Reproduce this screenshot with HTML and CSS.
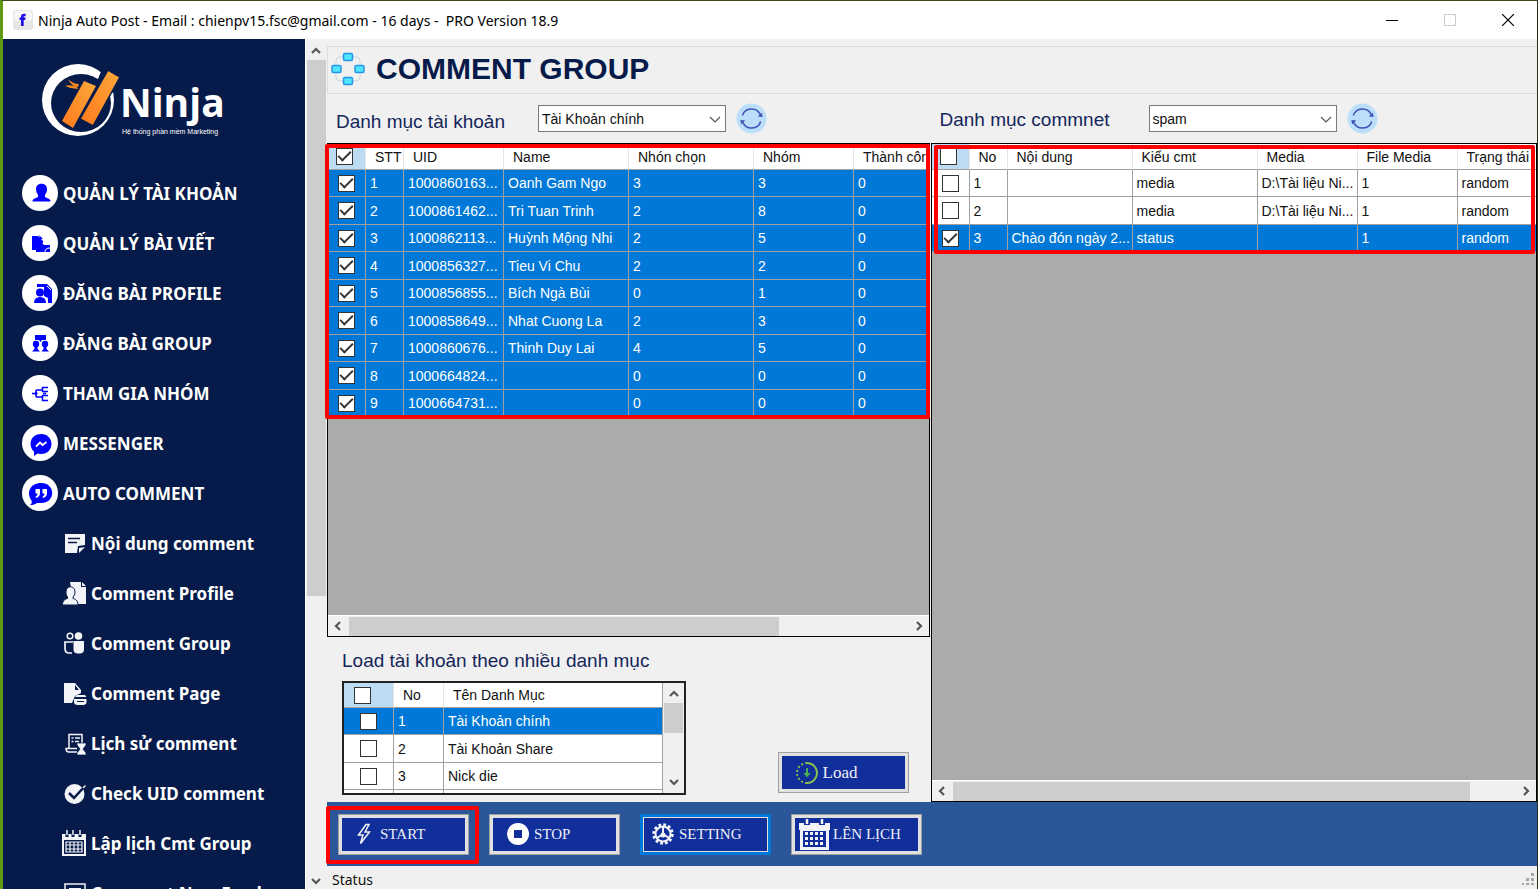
FILE: index.html
```html
<!DOCTYPE html>
<html lang="vi">
<head>
<meta charset="utf-8">
<title>Ninja Auto Post</title>
<link rel="stylesheet" href="styles.css">
</head>
<body>
<svg class="defs" aria-hidden="true">
  <symbol id="up" viewBox="0 0 10 7"><path d="M1 6 5 2l4 4" fill="none" stroke="currentColor" stroke-width="2.2"/></symbol>
  <symbol id="down" viewBox="0 0 10 7"><path d="M1 1l4 4 4-4" fill="none" stroke="currentColor" stroke-width="2.2"/></symbol>
  <symbol id="left" viewBox="0 0 7 10"><path d="M6 1 2 5l4 4" fill="none" stroke="currentColor" stroke-width="2.2"/></symbol>
  <symbol id="right" viewBox="0 0 7 10"><path d="M1 1l4 4-4 4" fill="none" stroke="currentColor" stroke-width="2.2"/></symbol>
  <symbol id="chevron" viewBox="0 0 12 7"><path d="M1 1l5 5 5-5" fill="none" stroke="#555" stroke-width="1.2"/></symbol>
  <symbol id="refresh" viewBox="0 0 32 32"><circle cx="16" cy="16" r="15.5" fill="#bbdefb"/><path d="M6.500 13a10 10 0 0 1 18.600-1M25.500 19a10 10 0 0 1-18.600 1" fill="none" stroke="#3f51b5" stroke-width="1.600"/><path d="M22.500 14l5 .5-.8-4.500zM9.500 18l-5-.5.8 4.500z" fill="#3f51b5"/></symbol>
</svg>
<div class="window">
  <header class="titlebar">
    <svg class="app-icon" viewBox="0 0 20 20"><rect width="20" height="20" rx="3" fill="#e6e6e6"/><rect x="1" y="1" width="18" height="10" rx="3" fill="#f6f6f6"/><path d="M8 16V10H6.500V7.500H8V6.500C8 4.500 9.200 3.700 11 3.700h1.700v2.500h-1c-.8 0-1 .3-1 1v.4h1.900L12.300 10h-1.600v6z" fill="#2010e0"/></svg>
    <span class="title-text">Ninja Auto Post - Email : chienpv15.fsc@gmail.com - 16 days -&nbsp; PRO Version 18.9</span>
    <button class="win-btn" aria-label="Minimize"><svg viewBox="0 0 12 12"><path d="M0 6.500h12" stroke="#000"/></svg></button>
    <button class="win-btn" aria-label="Maximize"><svg viewBox="0 0 12 12"><path d="M.5.5h11v11H.5z" fill="none" stroke="#ccc"/></svg></button>
    <button class="win-btn" aria-label="Close"><svg viewBox="0 0 12 12"><path d="M0 0l12 12M12 0 0 12" stroke="#000" stroke-width="1.200"/></svg></button>
  </header>
  <div class="body">
    <nav class="sidebar">
      <svg class="logo" viewBox="0 0 190 80">
        <defs><linearGradient id="og" x1="0" y1="1" x2="1" y2="0"><stop offset="0" stop-color="#ff7a1c"/><stop offset="1" stop-color="#fba83a"/></linearGradient></defs>
        <circle cx="37" cy="38" r="36" fill="#fff"/><ellipse cx="40" cy="41" rx="30" ry="29" fill="#061b4a"/>
        <path d="M63 3l20 8-9 19-13 4-8-8z" fill="#061b4a"/>
        <path d="M43 19l12 5-23 42-11-7z" fill="url(#og)"/><path d="M67 8l12 7-27 49-13-7z" fill="url(#og)" stroke="#061b4a" stroke-width="1.500"/>
        <path d="M27 17q5 5 11 5l-1 3q-7-1-10-8zM24 24q5-2 12 1l1 2q-7 0-13-3z" fill="#f58a20"/>
        <text class="logo-name" x="79" y="55">Ninja</text>
        <text class="logo-sub" x="81" y="72">Hệ thống phần mềm Marketing</text>
      </svg>
      <a class="item" href="#"><svg viewBox="0 0 36 36"><circle cx="18" cy="18" r="18" fill="#fff"/><path d="M14 14c0-7 11-7 11 0 0 3-1 4-2 6v2c2 1.500 5 1 5.500 4.500H10.500C10.800 23 14 23.500 16 22v-2c-1-2-2-3-2-6z" fill="#00f"/></svg>QUẢN LÝ TÀI KHOẢN</a>
      <a class="item" href="#"><svg viewBox="0 0 36 36"><circle cx="18" cy="18" r="18" fill="#fff"/><path d="M10 11h6l5 5v2h-6v7h-5zM17 10l4 4h-3z" fill="#00f"/><path d="M14 18h6l2 2h6v7H14z" fill="#00f"/><path d="M23 27q0-4 5-4" stroke="#fff" fill="none"/></svg>QUẢN LÝ BÀI VIẾT</a>
      <a class="item" href="#"><svg viewBox="0 0 36 36"><circle cx="18" cy="18" r="18" fill="#fff"/><path d="M15 9h10l5 5v14h-4v-5l-4-2V12h-7z" fill="#00f"/><path d="M25 11l4 4" stroke="#fff"/><circle cx="18" cy="17.500" r="4" fill="#00f"/><path d="M12 28q0-6 6-6t6 6z" fill="#00f"/></svg>ĐĂNG BÀI PROFILE</a>
      <a class="item" href="#"><svg viewBox="0 0 36 36"><circle cx="18" cy="18" r="18" fill="#fff"/><path d="M13 10h11v5h-4l-1.500 2-1.500-2h-4z" fill="#00f"/><circle cx="14" cy="19" r="3.200" fill="#00f"/><circle cx="23" cy="19" r="3.200" fill="#00f"/><path d="M12.500 21h3v3l2.500 2.500H10l2.500-2.500zM21.500 21h3v3l2.500 2.500h-7.500l2-2.500z" fill="#00f"/></svg>ĐĂNG BÀI GROUP</a>
      <a class="item" href="#"><svg viewBox="0 0 36 36"><circle cx="18" cy="18" r="18" fill="#fff"/><g fill="none" stroke="#00f" stroke-width="1.500"><path d="M10 18.500h4M14 15v7M14 15h6M14 22h6M26 12.500h-5.500v4H26M26 20.500h-5.500v5H26M24 18.500h-3"/></g><circle cx="14" cy="18.500" r="1.500" fill="#00f"/></svg>THAM GIA NHÓM</a>
      <a class="item" href="#"><svg viewBox="0 0 36 36"><circle cx="18" cy="18" r="18" fill="#fff"/><path d="M19 9c14 0 14 20 0 20-1.500 0-2.500-.3-3.500-.5L12 31v-4.500C6 21 8 9 19 9z" fill="#00f"/><path d="M14 21.500l4-4 2.500 2.500 4-3" fill="none" stroke="#fff" stroke-width="1.800"/></svg>MESSENGER</a>
      <a class="item" href="#"><svg viewBox="0 0 36 36"><circle cx="18" cy="18" r="18" fill="#fff"/><path d="M19 8c15 0 15 20 0 20h-4c-2 1.500-4 2-7 2 2-1 2-3 1.500-4.500C4 18 8 8 19 8z" fill="#00f"/><path d="M13.500 14h4.500v4q0 4-4 5l-.5-1.200q2-1 2-3.300h-2zM20.500 14H25v4q0 4-4 5l-.5-1.200q2-1 2-3.300h-2z" fill="#fff"/></svg>AUTO COMMENT</a>
      <a class="item sub" href="#"><svg viewBox="0 0 26 26"><path d="M4 4h20v11l-7 1-1 7H4z" fill="#f3f4f7"/><path d="M24 17l-6 6v-5z" fill="#f3f4f7"/><path d="M7 8.500h12M7 12.500h9" stroke="#061b4a" stroke-width="1.500"/></svg>Nội dung comment</a>
      <a class="item sub" href="#"><svg viewBox="0 0 26 26"><path d="M9 2h11v5h5v17h-9l-4-6z" fill="#f3f4f7"/><path d="M21 2l4 4h-4z" fill="#f3f4f7"/><path d="M5 12c0-7 9-7 9 0 0 3-1 3.500-2 5v1.500c2 .5 5 1.500 5 6.500H1.500c0-5 3-6 5-6.500V17c-1-1.500-1.500-2-1.500-5z" fill="#f3f4f7" stroke="#061b4a"/></svg>Comment Profile</a>
      <a class="item sub" href="#"><svg viewBox="0 0 26 26"><circle cx="9" cy="6" r="2.800" fill="none" stroke="#f3f4f7" stroke-width="1.500"/><circle cx="17.500" cy="6" r="3.800" fill="#f3f4f7"/><path d="M11 23H8q-4 0-4-5v-6h8" fill="none" stroke="#f3f4f7" stroke-width="1.700"/><path d="M12.500 11H23v8q0 4-3.500 4.500H16q-3.500-.5-3.500-4.500z" fill="#f3f4f7"/></svg>Comment Group</a>
      <a class="item sub" href="#"><svg viewBox="0 0 26 26"><path d="M3 3h11l6 7v3l-6 3-3 7H3z" fill="#f3f4f7"/><path d="M14 5l4 5h-4z" fill="#061b4a"/><path d="M16 15h8l1.500 2H14zM13 19h12.500v4q-1 2-3 2h-6q-2.500 0-3.500-2z" fill="#f3f4f7"/><path d="M16 21.500h7" stroke="#061b4a"/></svg>Comment Page</a>
      <a class="item sub" href="#"><svg viewBox="0 0 26 26"><g fill="none" stroke="#f3f4f7" stroke-width="1.500"><path d="M8 18V4.500h13V13M10.500 8h2M14 8h5M10.500 11.500h2M14 11.500h4M16 18.500H5q0 3.500 3 3.500h8"/></g><path d="M16 13h9v2l-3 4 3 4v2h-9v-2l3-4-3-4z" fill="#f3f4f7" stroke="#061b4a" stroke-width=".7"/></svg>Lịch sử comment</a>
      <a class="item sub" href="#"><svg viewBox="0 0 26 26"><circle cx="13.500" cy="14" r="10" fill="#f3f4f7"/><path d="M8 13l5 5L24 6" fill="none" stroke="#061b4a" stroke-width="2.500"/><path d="M22 8l2.500-2.500" stroke="#f3f4f7" stroke-width="1.500"/></svg>Check UID comment</a>
      <a class="item sub" href="#"><svg viewBox="0 0 26 26"><path d="M2 5h22v20H2z" fill="none" stroke="#f3f4f7" stroke-width="2"/><path d="M1 4h24v6H1z" fill="#f3f4f7"/><path d="M6 1v6M12 1v6M19 1v6" stroke="#061b4a" stroke-width="3"/><path d="M6 0v5M12 0v5M19 0v5" stroke="#f3f4f7" stroke-width="1.500"/><path d="M5 12h16v10H5zM5 15h16M5 19h16M9 12v10M13 12v10M17 12v10" fill="none" stroke="#f3f4f7" stroke-width="1.200"/></svg>Lập lịch Cmt Group</a>
      <a class="item sub" href="#"><svg viewBox="0 0 26 26"><path d="M4 4h20v18H4z" fill="none" stroke="#f3f4f7" stroke-width="1.500"/><path d="M8 9h12M8 13h12" stroke="#f3f4f7" stroke-width="2"/></svg>Comment New Feed</a>
    </nav>
    <div class="vscroll side-scroll"><svg class="v"><use href="#up"/></svg><i class="thumb"></i><svg class="v"><use href="#down"/></svg></div>
    <main class="main">
      <div class="page-head">
        <svg viewBox="0 0 34 34"><rect x="5" y="5" width="24" height="24" rx="4" fill="none" stroke="#c9d6e6"/><g fill="#50e6ff" stroke="#2196e8" stroke-width="1.500"><rect x="12.500" y="1.500" width="9" height="7" rx="1.500"/><rect x="12.500" y="25.500" width="9" height="7" rx="1.500"/><rect x="1" y="13.500" width="9" height="7" rx="1.500"/><rect x="24" y="13.500" width="9" height="7" rx="1.500"/></g></svg>
        <h1>COMMENT GROUP</h1>
      </div>
      <div class="columns">
        <section class="col">
          <div class="filter">
            <label for="acc">Danh mục tài khoản</label>
            <span class="combo"><select id="acc"><option>Tài Khoản chính</option></select><svg><use href="#chevron"/></svg></span>
            <button class="refresh" aria-label="Refresh accounts"><svg><use href="#refresh"/></svg></button>
          </div>
          <div class="grid">
            <div class="marked mark-left">
              <table class="data selected">
                <colgroup><col class="w38"><col class="w38"><col class="w100"><col class="w125"><col class="w125"><col class="w100"><col></colgroup>
                <thead><tr><th class="pick"><input type="checkbox" aria-label="All" checked></th><th>STT</th><th>UID</th><th>Name</th><th>Nhón chọn</th><th>Nhóm</th><th>Thành công</th></tr></thead>
                <tbody>
                  <tr><td><input type="checkbox" aria-label="1" checked></td><td>1</td><td>1000860163...</td><td>Oanh Gam Ngo</td><td>3</td><td>3</td><td>0</td></tr>
                  <tr><td><input type="checkbox" aria-label="2" checked></td><td>2</td><td>1000861462...</td><td>Tri Tuan Trinh</td><td>2</td><td>8</td><td>0</td></tr>
                  <tr><td><input type="checkbox" aria-label="3" checked></td><td>3</td><td>1000862113...</td><td>Huỳnh Mộng Nhi</td><td>2</td><td>5</td><td>0</td></tr>
                  <tr><td><input type="checkbox" aria-label="4" checked></td><td>4</td><td>1000856327...</td><td>Tieu Vi Chu</td><td>2</td><td>2</td><td>0</td></tr>
                  <tr><td><input type="checkbox" aria-label="5" checked></td><td>5</td><td>1000856855...</td><td>Bích Ngà Bùi</td><td>0</td><td>1</td><td>0</td></tr>
                  <tr><td><input type="checkbox" aria-label="6" checked></td><td>6</td><td>1000858649...</td><td>Nhat Cuong La</td><td>2</td><td>3</td><td>0</td></tr>
                  <tr><td><input type="checkbox" aria-label="7" checked></td><td>7</td><td>1000860676...</td><td>Thinh Duy Lai</td><td>4</td><td>5</td><td>0</td></tr>
                  <tr><td><input type="checkbox" aria-label="8" checked></td><td>8</td><td>1000664824...</td><td></td><td>0</td><td>0</td><td>0</td></tr>
                  <tr><td><input type="checkbox" aria-label="9" checked></td><td>9</td><td>1000664731...</td><td></td><td>0</td><td>0</td><td>0</td></tr>
                </tbody>
              </table>
            </div>
            <div class="hscroll"><svg><use href="#left"/></svg><span class="track"><i class="thumb t79"></i></span><svg><use href="#right"/></svg></div>
          </div>
          <div class="load-panel">
            <div>
              <h2>Load tài khoản theo nhiều danh mục</h2>
              <div class="mini">
                <div class="mini-view">
                  <table class="data">
                    <colgroup><col class="w50"><col class="w50"><col></colgroup>
                    <thead><tr><th class="pick"><input type="checkbox" aria-label="All categories"></th><th>No</th><th>Tên Danh Mục</th></tr></thead>
                    <tbody>
                      <tr class="on"><td><input type="checkbox" aria-label="Tài Khoản chính"></td><td>1</td><td>Tài Khoản chính</td></tr>
                      <tr><td><input type="checkbox" aria-label="Tài Khoản Share"></td><td>2</td><td>Tài Khoản Share</td></tr>
                      <tr><td><input type="checkbox" aria-label="Nick die"></td><td>3</td><td>Nick die</td></tr>
                      <tr><td></td><td></td><td></td></tr>
                    </tbody>
                  </table>
                </div>
                <div class="vscroll mini-scroll"><svg class="v"><use href="#up"/></svg><i class="thumb"></i><svg class="v"><use href="#down"/></svg></div>
              </div>
            </div>
            <button class="btn load"><svg viewBox="0 0 22 22"><path d="M11 1a10 10 0 0 1 0 20" fill="none" stroke="#8bc34a" stroke-width="1.800"/><path d="M11 21a10 10 0 0 1 0-20" fill="none" stroke="#8bc34a" stroke-width="1.800" stroke-dasharray="2 2.200"/><path d="M11 6v5" stroke="#4caf50" stroke-width="2"/><path d="M7.500 11h7L11 15.500z" fill="#4caf50"/></svg>Load</button>
          </div>
        </section>
        <section class="col">
          <div class="filter right">
            <label for="cmt">Danh mục commnet</label>
            <span class="combo"><select id="cmt"><option>spam</option></select><svg><use href="#chevron"/></svg></span>
            <button class="refresh" aria-label="Refresh comments"><svg><use href="#refresh"/></svg></button>
          </div>
          <div class="grid">
            <div class="marked mark-right">
              <table class="data">
                <colgroup><col class="w38"><col class="w38"><col class="w125"><col class="w125"><col class="w100"><col class="w100"><col></colgroup>
                <thead><tr><th class="pick"><input type="checkbox" aria-label="All comments"></th><th>No</th><th>Nội dung</th><th>Kiểu cmt</th><th>Media</th><th>File Media</th><th>Trạng thái</th></tr></thead>
                <tbody>
                  <tr><td><input type="checkbox" aria-label="Comment 1"></td><td>1</td><td></td><td>media</td><td>D:\Tài liệu Ni...</td><td>1</td><td>random</td></tr>
                  <tr><td><input type="checkbox" aria-label="Comment 2"></td><td>2</td><td></td><td>media</td><td>D:\Tài liệu Ni...</td><td>1</td><td>random</td></tr>
                  <tr class="on"><td><input type="checkbox" aria-label="Comment 3" checked></td><td>3</td><td>Chào đón ngày 2...</td><td>status</td><td></td><td>1</td><td>random</td></tr>
                </tbody>
              </table>
            </div>
            <div class="hscroll"><svg><use href="#left"/></svg><span class="track"><i class="thumb t92"></i></span><svg><use href="#right"/></svg></div>
          </div>
        </section>
      </div>
      <div class="toolbar">
        <button class="btn start"><svg viewBox="0 0 14 22"><path d="M9 1.500 1.500 12H6l-2.500 8.500L12.500 9H8l4-7.500z" fill="none" stroke="#f3f4f7" stroke-width="1.500"/></svg>START</button>
        <button class="btn stop"><svg viewBox="0 0 22 22"><circle cx="11" cy="11" r="11" fill="#fff"/><path d="M7 7h8v8H7z" fill="#112f9b"/></svg>STOP</button>
        <button class="btn setting"><svg viewBox="0 0 22 22"><circle cx="11" cy="11" r="9" fill="none" stroke="#f3f4f7" stroke-width="3.500" stroke-dasharray="2.700 2.012"/><circle cx="11" cy="11" r="7.500" fill="none" stroke="#f3f4f7" stroke-width="2"/><path d="M11 4v7M11 11l-6 4M11 11l6 4" stroke="#f3f4f7" stroke-width="2"/><circle cx="11" cy="12" r="2.500" fill="#f3f4f7"/></svg>SETTING</button>
        <button class="btn plan"><svg viewBox="0 0 31 31"><path d="M0 4h31v7H0zM1 10h29v21H1z" fill="#f3f4f7"/><path d="M4 12h23v16H4z" fill="#112f9b"/><path d="M5 0h6v6H5zM20 0h6v6h-6z" fill="#112f9b"/><path d="M8 0v5M23 0v5" stroke="#f3f4f7" stroke-width="2.500"/><path d="M6 14.500h19M6 19.500h19M6 24.500h19" stroke="#f3f4f7" stroke-width="3" stroke-dasharray="3 2"/></svg>LÊN LỊCH</button>
      </div>
      <footer class="status"><span>Status</span><svg viewBox="0 0 12 12"><path d="M9 0h3v3H9zM9 5h3v3H9zM9 10h3v2H9zM4 5h3v3H4zM4 10h3v2H4zM0 10h2v2H0z" fill="#a5a5a5"/></svg></footer>
    </main>
  </div>
</div>
</body>
</html>
```
FILE: styles.css
```css
* { box-sizing: border-box; }
body { margin: 0; font: 14px "Liberation Sans", sans-serif; color: #111; }
button { font: inherit; border: 0; background: none; padding: 0; }
svg { display: block; flex: none; }
.defs { position: absolute; width: 0; height: 0; }
.window { height: 100vh; display: flex; flex-direction: column; overflow: hidden; background: #f0f0f0; border-top: 1px solid #3d4a1c; border-left: 3px solid #5f9a10; border-right: 1px solid #2a2f1c; }
.titlebar { flex: none; height: 38px; display: flex; align-items: center; padding-left: 10px; background: #fff; }
.app-icon { width: 20px; height: 20px; }
.title-text { flex: 1; padding-left: 5px; font: 14px "Noto Sans", sans-serif; color: #000; white-space: nowrap; }
.win-btn { width: 58px; height: 38px; display: grid; place-items: center; }
.win-btn svg { width: 12px; height: 12px; }
.body { flex: 1; min-height: 0; display: flex; }

.sidebar { flex: none; width: 303px; overflow: hidden; background: #061b4a; border-right: 1px solid #fff; }
.logo { width: 190px; height: 80px; margin: 23px 0 26px 38px; }
.logo-name { font: bold 39px "Open Sans", sans-serif; fill: #fff; }
.logo-sub { font: 7px "Liberation Sans", sans-serif; fill: #fff; }
.item { display: flex; align-items: center; gap: 5px; height: 50px; padding-left: 19px; font: bold 17px "Noto Sans", sans-serif; color: #fff; text-decoration: none; white-space: nowrap; }
.item svg { width: 36px; height: 36px; }
.sub { padding-left: 58px; gap: 4px; }
.sub svg { width: 26px; height: 26px; }

.vscroll { flex: none; display: flex; flex-direction: column; align-items: center; background: #f0f0f0; color: #555; }
.vscroll svg { width: 10px; height: 7px; }
.thumb { display: block; background: #cdcdcd; }
.side-scroll { width: 20px; padding: 8px 0 4px; }
.side-scroll .thumb { width: 19px; height: 64%; margin: 6px 0 auto; }

.main { flex: 1; min-width: 0; display: flex; flex-direction: column; padding-top: 7px; }
.page-head { flex: none; height: 48px; display: flex; align-items: center; gap: 11px; margin-left: 1px; padding: 0 0 3px 3px; border: 1px solid #dcdcdc; border-right: 0; }
.page-head svg { width: 34px; height: 34px; }
h1 { margin: 0; font-size: 30px; color: #061b4a; }
.columns { flex: 1; min-height: 0; display: grid; grid-template-columns: 604fr 608fr; }
.col { display: flex; flex-direction: column; min-width: 0; padding-left: 1px; }
.filter { flex: none; height: 49px; display: flex; align-items: center; padding-left: 9px; }
.filter label { width: 202px; padding-top: 6px; font-size: 19px; color: #14265a; white-space: nowrap; }
.filter.right label { width: 209px; padding-top: 2px; }
.combo { position: relative; width: 188px; }
.combo select { width: 100%; height: 27px; appearance: none; padding: 0 3px; border: 1px solid #7a7a7a; border-radius: 0; background: #fff; font: 14px "Liberation Sans", sans-serif; color: #111; }
.combo svg { position: absolute; right: 5px; top: 11px; width: 12px; height: 7px; pointer-events: none; }
.refresh { margin-left: 10px; }
.refresh svg { width: 31px; height: 31px; }

.grid { flex: 1; min-height: 0; display: flex; flex-direction: column; justify-content: space-between; background: #ababab; border: 1px solid #000; }
.marked { position: relative; }
.marked::after { content: ""; position: absolute; border: 4px solid #f00; border-radius: 2px; pointer-events: none; }
.mark-left::after { inset: 0 -1px -2px -3px; }
.mark-right::after { inset: 1px 1px -2px 2px; }
.data { width: 100%; table-layout: fixed; border-collapse: separate; border-spacing: 0; background: #fff; }
.w38 { width: 38px; }
.w50 { width: 50px; }
.w100 { width: 100px; }
.w125 { width: 125px; }
th, td { overflow: hidden; padding: 0 0 0 4px; white-space: nowrap; text-align: left; font-weight: normal; border-right: 1px solid #a0a0a0; border-bottom: 1px solid #a0a0a0; }
th { height: 26px; padding: 1px 0 0 9px; border-right-color: #e5e5e5; }
td { height: 27px; }
tr:nth-child(even) td { height: 28px; }
th:last-child, td:last-child { border-right: 0; }
.pick { background: #bcdcf4; padding: 0 0 0 8px; }
td:first-child { padding-left: 10px; }
.selected td, .on td { background: #0078d7; color: #fff; }
input[type=checkbox] { appearance: none; display: grid; place-items: center; width: 17px; height: 17px; margin: 0; border: 1px solid #333; background: #fff; }
input:checked::after { content: ""; width: 11px; height: 5px; margin-bottom: 4px; border-left: 2px solid #333; border-bottom: 2px solid #333; transform: rotate(-45deg); }
.hscroll { flex: none; height: 21px; display: flex; align-items: center; gap: 8px; padding: 0 6px; background: #f0f0f0; color: #555; border-top: 1px solid #fff; }
.hscroll svg { width: 7px; height: 10px; }
.track { flex: 1; height: 19px; }
.track .thumb { height: 100%; }
.t79 { width: 77%; }
.t92 { width: 92%; }

.load-panel { flex: none; height: 165px; display: flex; justify-content: space-between; align-items: flex-start; padding: 12px 21px 0 15px; }
h2 { margin: 0 0 8px; font: 19px/24px "Liberation Sans", sans-serif; color: #14265a; white-space: nowrap; }
.mini { width: 344px; height: 114px; display: flex; border: 2px solid #222; background: #f0f0f0; }
.mini-view { flex: 1; overflow: hidden; }
.mini td:first-child { padding-left: 16px; }
.mini th { height: 25px; padding-top: 0; }
.mini .pick { padding-left: 10px; }
.mini th:last-child, .mini td:last-child { border-right: 1px solid #a0a0a0; }
.mini-scroll { width: 21px; padding: 7px 0; }
.mini-scroll .thumb { width: 19px; height: 30px; margin: 6px 0 auto; }

.btn { width: 131px; height: 41px; display: flex; align-items: center; background: #112f9b; border: 1px solid #a0a0a0; box-shadow: inset 0 0 0 3px #e1e1e1; font: 15px "Liberation Serif", serif; color: #f0f0f5; white-space: nowrap; }
.btn svg { width: 22px; height: 22px; }
.load { margin-top: 103px; padding-left: 17px; gap: 5px; font-size: 17px; }
.toolbar { flex: none; height: 64px; display: flex; align-items: center; gap: 20px; margin-left: 1px; padding-left: 11px; background: #2b579a; }
.start { position: relative; padding-left: 18px; gap: 9px; }
.start svg { width: 14px; }
.start::after { content: ""; position: absolute; inset: -9px -11px -10px -13px; border: 4px solid #f00; border-radius: 2px; }
.stop { padding-left: 17px; gap: 5px; }
.setting { padding-left: 10px; gap: 5px; border: 2px solid #0078d7; box-shadow: inset 0 0 0 1px #0078d7, inset 0 0 0 2px #e1e1e1; }
.plan { padding-left: 7px; gap: 3px; }
.plan svg { width: 31px; height: 31px; }
.status { flex: none; height: 23px; display: flex; align-items: center; justify-content: space-between; padding: 3px 3px 0 6px; font: 14px "Noto Sans", sans-serif; }
.status svg { width: 12px; height: 12px; }
```
